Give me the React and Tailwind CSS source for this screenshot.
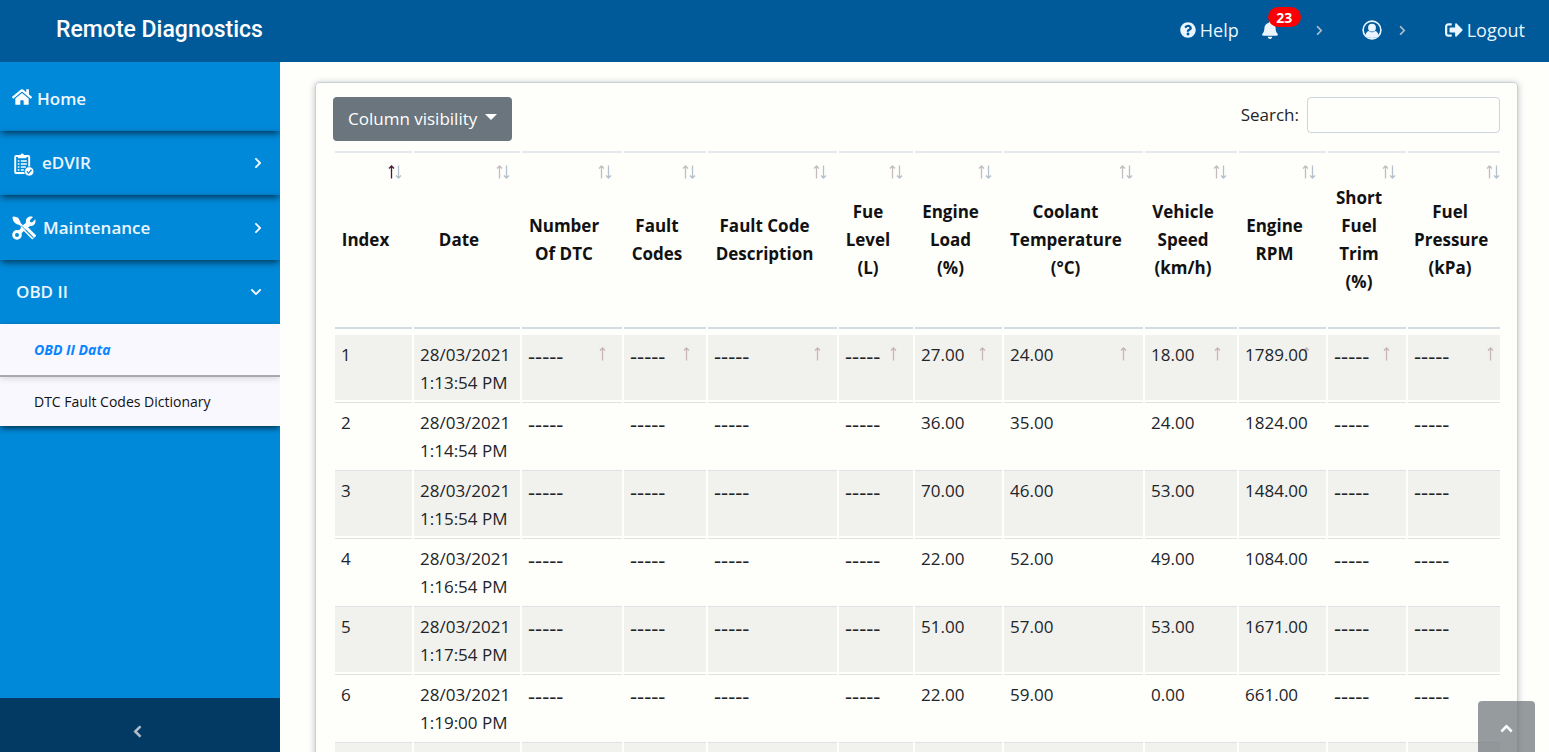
import React, { useState } from 'react';
import {
  FaHome,
  FaQuestionCircle,
  FaBell,
  FaSignOutAlt,
  FaChevronRight,
  FaChevronDown,
  FaChevronLeft,
  FaChevronUp,
} from 'react-icons/fa';

const EMPTY = '-----';

const columns = [
  { key: 'index', lines: ['Index'], width: 'w-[77px]' },
  { key: 'date', lines: ['Date'], width: 'w-[106px]' },
  { key: 'dtc', lines: ['Number', 'Of DTC'], width: 'w-[100px]' },
  { key: 'codes', lines: ['Fault', 'Codes'], width: 'w-[82px]' },
  { key: 'description', lines: ['Fault Code', 'Description'], width: 'w-[129px]' },
  { key: 'fuel', lines: ['Fue', 'Level', '(L)'], width: 'w-[74px]' },
  { key: 'load', lines: ['Engine', 'Load', '(%)'], width: 'w-[87px]' },
  { key: 'coolant', lines: ['Coolant', 'Temperature', '(°C)'], width: 'w-[139px]' },
  { key: 'speed', lines: ['Vehicle', 'Speed', '(km/h)'], width: 'w-[92px]' },
  { key: 'rpm', lines: ['Engine', 'RPM'], width: 'w-[87px]' },
  { key: 'trim', lines: ['Short', 'Fuel', 'Trim', '(%)'], width: 'w-[78px]' },
  { key: 'pressure', lines: ['Fuel', 'Pressure', '(kPa)'], width: 'w-[92px]' },
];

const readings = [
  { index: 1, time: '1:13:54 PM', load: '27.00', coolant: '24.00', speed: '18.00', rpm: '1789.00' },
  { index: 2, time: '1:14:54 PM', load: '36.00', coolant: '35.00', speed: '24.00', rpm: '1824.00' },
  { index: 3, time: '1:15:54 PM', load: '70.00', coolant: '46.00', speed: '53.00', rpm: '1484.00' },
  { index: 4, time: '1:16:54 PM', load: '22.00', coolant: '52.00', speed: '49.00', rpm: '1084.00' },
  { index: 5, time: '1:17:54 PM', load: '51.00', coolant: '57.00', speed: '53.00', rpm: '1671.00' },
  { index: 6, time: '1:19:00 PM', load: '22.00', coolant: '59.00', speed: '0.00', rpm: '661.00' },
];

const ArrowUp = ({ className }) => (
  <svg viewBox="0 0 7 14" className={`h-[14px] w-[7px] ${className}`} fill="none" stroke="currentColor" strokeWidth="1.3">
    <path d="M3.5 13.5V1M1 3.5L3.5 1L6 3.5" />
  </svg>
);

const ArrowDown = ({ className }) => (
  <svg viewBox="0 0 7 14" className={`h-[14px] w-[7px] ${className}`} fill="none" stroke="currentColor" strokeWidth="1.3">
    <path d="M3.5 0.5V13M1 10.5L3.5 13L6 10.5" />
  </svg>
);

const UserIcon = () => (
  <svg viewBox="0 0 20 20" className="size-5" fill="none">
    <circle cx="10" cy="10" r="8.9" stroke="currentColor" strokeWidth="1.6" />
    <circle cx="10" cy="7.7" r="3.9" fill="currentColor" />
    <path d="M3.4 15.2C4 12.6 5.4 11.2 6.9 11C8.6 12.7 11.4 12.7 13.1 11C14.6 11.2 16 12.6 16.6 15.2C13.5 18.9 6.5 18.9 3.4 15.2Z" fill="currentColor" />
  </svg>
);

const ClipboardIcon = () => (
  <svg viewBox="0 0 20 24" className="mt-1 h-6 w-5" fill="none" stroke="white">
    <rect x="1.2" y="3" width="14" height="17" rx="1" strokeWidth="1.9" />
    <path d="M4 5.2V2.2H6.4A1.8 1.8 0 0 1 10 2.2H12.4V5.2Z" fill="white" stroke="none" />
    <path d="M3.8 8h1.6M6.8 8h6M3.8 11h1.6M6.8 11h6M3.8 14h1.6M6.8 14h5M3.8 17h1.6M6.8 17h3" strokeWidth="1.3" />
    <circle cx="15.2" cy="18.4" r="4.7" fill="white" stroke="#0089d9" strokeWidth="0.8" />
    <path d="M12.9 18.4l1.7 1.7 2.9-3.3" stroke="#0089d9" strokeWidth="1.3" />
  </svg>
);

const ToolsIcon = () => (
  <svg viewBox="0 0 24 24" className="h-6 w-6" fill="none" stroke="white">
    <path d="M0.4 1.8C0.6 0.8 1.4 0.4 2.2 0.4L6.2 1.8L8.6 6.2L6.6 8.8L4.2 8L1.6 5.6Z" fill="white" stroke="none" />
    <path d="M6 6l6 6" strokeWidth="2.4" />
    <path d="M10.5 9.8L22.3 21.6" strokeWidth="5.6" />
    <path d="M13.8 14.1l7.6 7.6" stroke="#0089d9" strokeWidth="1.1" />
    <path d="M15 9L7.4 16.6" strokeWidth="4" />
    <path d="M9.2 9.6l5.2 5.2" stroke="#0089d9" strokeWidth="0.8" />
    <circle cx="5" cy="18.9" r="3.4" strokeWidth="2.8" />
    <path d="M21 1L17.8 4.2L18.2 6L20 6.4L23.3 3.2C24.4 7 21.8 10.4 18.2 9.9L15.8 11.4L12.8 8.4L14 6C13.4 2 17.4 -0.4 21 1Z" fill="white" stroke="none" />
  </svg>
);

const NavItem = ({ icon, label, chevron, className }) => (
  <a
    href="#"
    className={`flex items-center text-[17px] font-semibold text-[#eef7ff] ${className}`}
  >
    {icon}
    <span className="flex-1">{label}</span>
    {chevron}
  </a>
);

const Sidebar = () => (
  <aside className="flex w-[280px] shrink-0 flex-col overflow-hidden bg-[#0089d9]">
    <nav>
      <NavItem
        icon={<FaHome className="mb-1 mr-[5px] size-5 text-white" />}
        label="Home"
        className="h-[69px] pl-3 pr-4 pt-1 shadow-[0_3px_7px_-1px_rgba(0,0,0,0.65)]"
      />
      <NavItem
        icon={<span className="mr-2 flex w-[22px] justify-end"><ClipboardIcon /></span>}
        label="eDVIR"
        chevron={<FaChevronRight className="size-3" />}
        className="h-16 pl-3 pr-4 shadow-[0_3px_7px_-1px_rgba(0,0,0,0.65)]"
      />
      <NavItem
        icon={<span className="mr-[7px]"><ToolsIcon /></span>}
        label="Maintenance"
        chevron={<FaChevronRight className="size-3" />}
        className="h-[65px] pl-3 pr-4 shadow-[0_3px_7px_-1px_rgba(0,0,0,0.65)]"
      />
      <NavItem
        label="OBD II"
        chevron={<FaChevronDown className="size-3" />}
        className="h-16 pl-4 pr-[18px]"
      />
      <div className="bg-[#f8f8fe] text-sm shadow-[0_3px_6px_-1px_rgba(0,0,0,0.7)]">
        <a
          href="#"
          className="flex h-[53px] items-center border-b-2 border-[#a9a9ad] pl-[34px] pt-px font-bold italic text-[#0a84ff] shadow-[0_2px_6px_rgba(0,0,0,0.12)]"
        >
          OBD II Data
        </a>
        <a href="#" className="flex h-[49px] items-center pl-[34px] text-[#111]">
          DTC Fault Codes Dictionary
        </a>
      </div>
    </nav>
    <button
      type="button"
      aria-label="Collapse menu"
      className="mt-auto flex h-[54px] items-center justify-center bg-[#023a63] pr-[6px] pt-3 text-[#b4c1cc]"
    >
      <FaChevronLeft className="size-[13px]" stroke="currentColor" strokeWidth="30" />
    </button>
  </aside>
);

const Header = () => (
  <header className="z-10 flex h-[62px] shrink-0 items-center bg-[#005a9a] pb-[2px] pl-14 pr-6 text-[#eaf5ff]">
    <h1 className="flex-1 pt-px font-['Roboto',sans-serif] text-[23px] font-medium text-white">Remote Diagnostics</h1>
    <a href="#" className="flex items-center gap-1 text-[18px]">
      <FaQuestionCircle className="size-4" />
      Help
    </a>
    <button type="button" aria-label="Notifications" className="relative ml-[22px] flex items-center">
      <FaBell className="size-[18px]" />
      <span className="absolute -top-[14px] left-[7px] flex h-5 w-[33px] items-center justify-center rounded-full bg-[#fa0000] text-[14px] font-bold text-white">
        23
      </span>
      <FaChevronRight className="ml-[35px] size-[11px] text-[#a9bccb]" />
    </button>
    <button type="button" aria-label="Account" className="ml-[37px] flex items-center">
      <UserIcon />
      <FaChevronRight className="ml-[15px] size-[11px] text-[#a9bccb]" />
    </button>
    <a href="#" className="ml-[37px] flex items-center gap-1 text-[18px]">
      <FaSignOutAlt className="size-[18px]" />
      Logout
    </a>
  </header>
);

const ColumnWidths = () => (
  <colgroup>
    {columns.map((column) => (
      <col key={column.key} className={column.width} />
    ))}
  </colgroup>
);

const ReadingsTable = () => {
  const cellValue = (reading, key) => {
    if (key === 'date') {
      return (
        <>
          28/03/2021
          <br />
          {reading.time}
        </>
      );
    }
    return reading[key] ?? <span className="text-[22px]">{EMPTY}</span>;
  };

  return (
    <table className="w-full table-fixed border-separate border-spacing-x-[2px] border-spacing-y-0 text-[17px] leading-7 text-[#212529]">
      <ColumnWidths />
      <thead>
        <tr>
          {columns.map((column, i) => {
            const last = i === columns.length - 1;
            return (
              <th
                key={column.key}
                scope="col"
                className={`relative h-[178px] border-y-2 border-b-[#d5dbe3] border-t-[#e4e9ee] pl-[6px] font-bold text-[#111] ${last ? 'pr-[14px]' : 'pr-[22px]'}`}
              >
                {column.lines.map((line) => (
                  <span key={line} className="block whitespace-nowrap">{line}</span>
                ))}
                <span className={`absolute top-3 flex ${last ? 'right-0' : 'right-[10px]'}`}>
                  <ArrowUp className={i === 0 ? 'text-[#4a1a3a]' : 'text-[#c5bcc0]'} />
                  <ArrowDown className="text-[#b4c0cc]" />
                </span>
              </th>
            );
          })}
        </tr>
      </thead>
      <tbody>
        {/* gap between the header and the scroll body */}
        <tr aria-hidden="true">
          <td colSpan={columns.length} className="h-[5px] p-0" />
        </tr>
        {readings.map((reading, row) => (
          <tr key={reading.index} className="group">
            {columns.map((column, i) => (
              <td
                key={column.key}
                className={`relative h-[68px] whitespace-nowrap border-b-2 border-t border-b-[#fefefb] bg-clip-padding pl-[6px] pt-[6px] align-top group-even:bg-[#f1f1ee] ${row === 0 ? 'border-t-transparent' : 'border-t-[#dee2e6]'}`}
              >
                {row === 0 && i > 1 && (
                  <ArrowUp
                    className={`absolute top-3 text-[#c8b4b9] ${i === columns.length - 1 ? 'right-[6px]' : 'right-4'}`}
                  />
                )}
                <span className="relative">{cellValue(reading, column.key)}</span>
              </td>
            ))}
          </tr>
        ))}
        <tr aria-hidden="true">
          {columns.map((column) => (
            <td key={column.key} className="h-[68px] border-t border-[#dee2e6] bg-[#f1f1ee]" />
          ))}
        </tr>
      </tbody>
    </table>
  );
};

const App = () => {
  const [search, setSearch] = useState('');

  return (
    <div className="flex h-screen flex-col overflow-hidden bg-[#fefefb] font-['Open_Sans','Noto_Sans',sans-serif]">
      <Header />
      <div className="flex min-h-0 flex-1">
        <Sidebar />
        <main className="min-w-0 flex-1 overflow-y-auto pb-8 pl-[35px] pr-[31px] pt-5 [scrollbar-width:none]">
          <section className="rounded border border-[#c9d0da] pb-4 pl-[17px] pr-[15px] pt-[14px] shadow-[0_1px_6px_rgba(60,70,90,0.35)]">
            <div className="mb-[10px] flex items-start justify-between">
              <button
                type="button"
                className="flex h-11 w-[179px] items-center justify-between rounded bg-[#6a757e] px-[15px] text-[17px] text-white"
              >
                Column visibility
                <span className="mb-1 border-x-[6px] border-t-[6px] border-x-transparent border-t-white" />
              </button>
              <div className="flex items-center gap-2 pr-[2px] text-[17px] text-[#212529]">
                <label htmlFor="search">Search:</label>
                <input
                  id="search"
                  type="search"
                  value={search}
                  onChange={(e) => setSearch(e.target.value)}
                  className="h-9 w-[193px] rounded border border-[#ced4de] px-2 outline-none"
                />
              </div>
            </div>
            <ReadingsTable />
          </section>
        </main>
      </div>
      <button
        type="button"
        aria-label="Back to top"
        className="fixed bottom-0 right-[14px] flex h-[51px] w-[57px] items-center justify-center rounded-t bg-[#6a7076]/70 pt-1 text-white"
      >
        <FaChevronUp className="size-[13px]" stroke="currentColor" strokeWidth="30" />
      </button>
    </div>
  );
};

export default App;
